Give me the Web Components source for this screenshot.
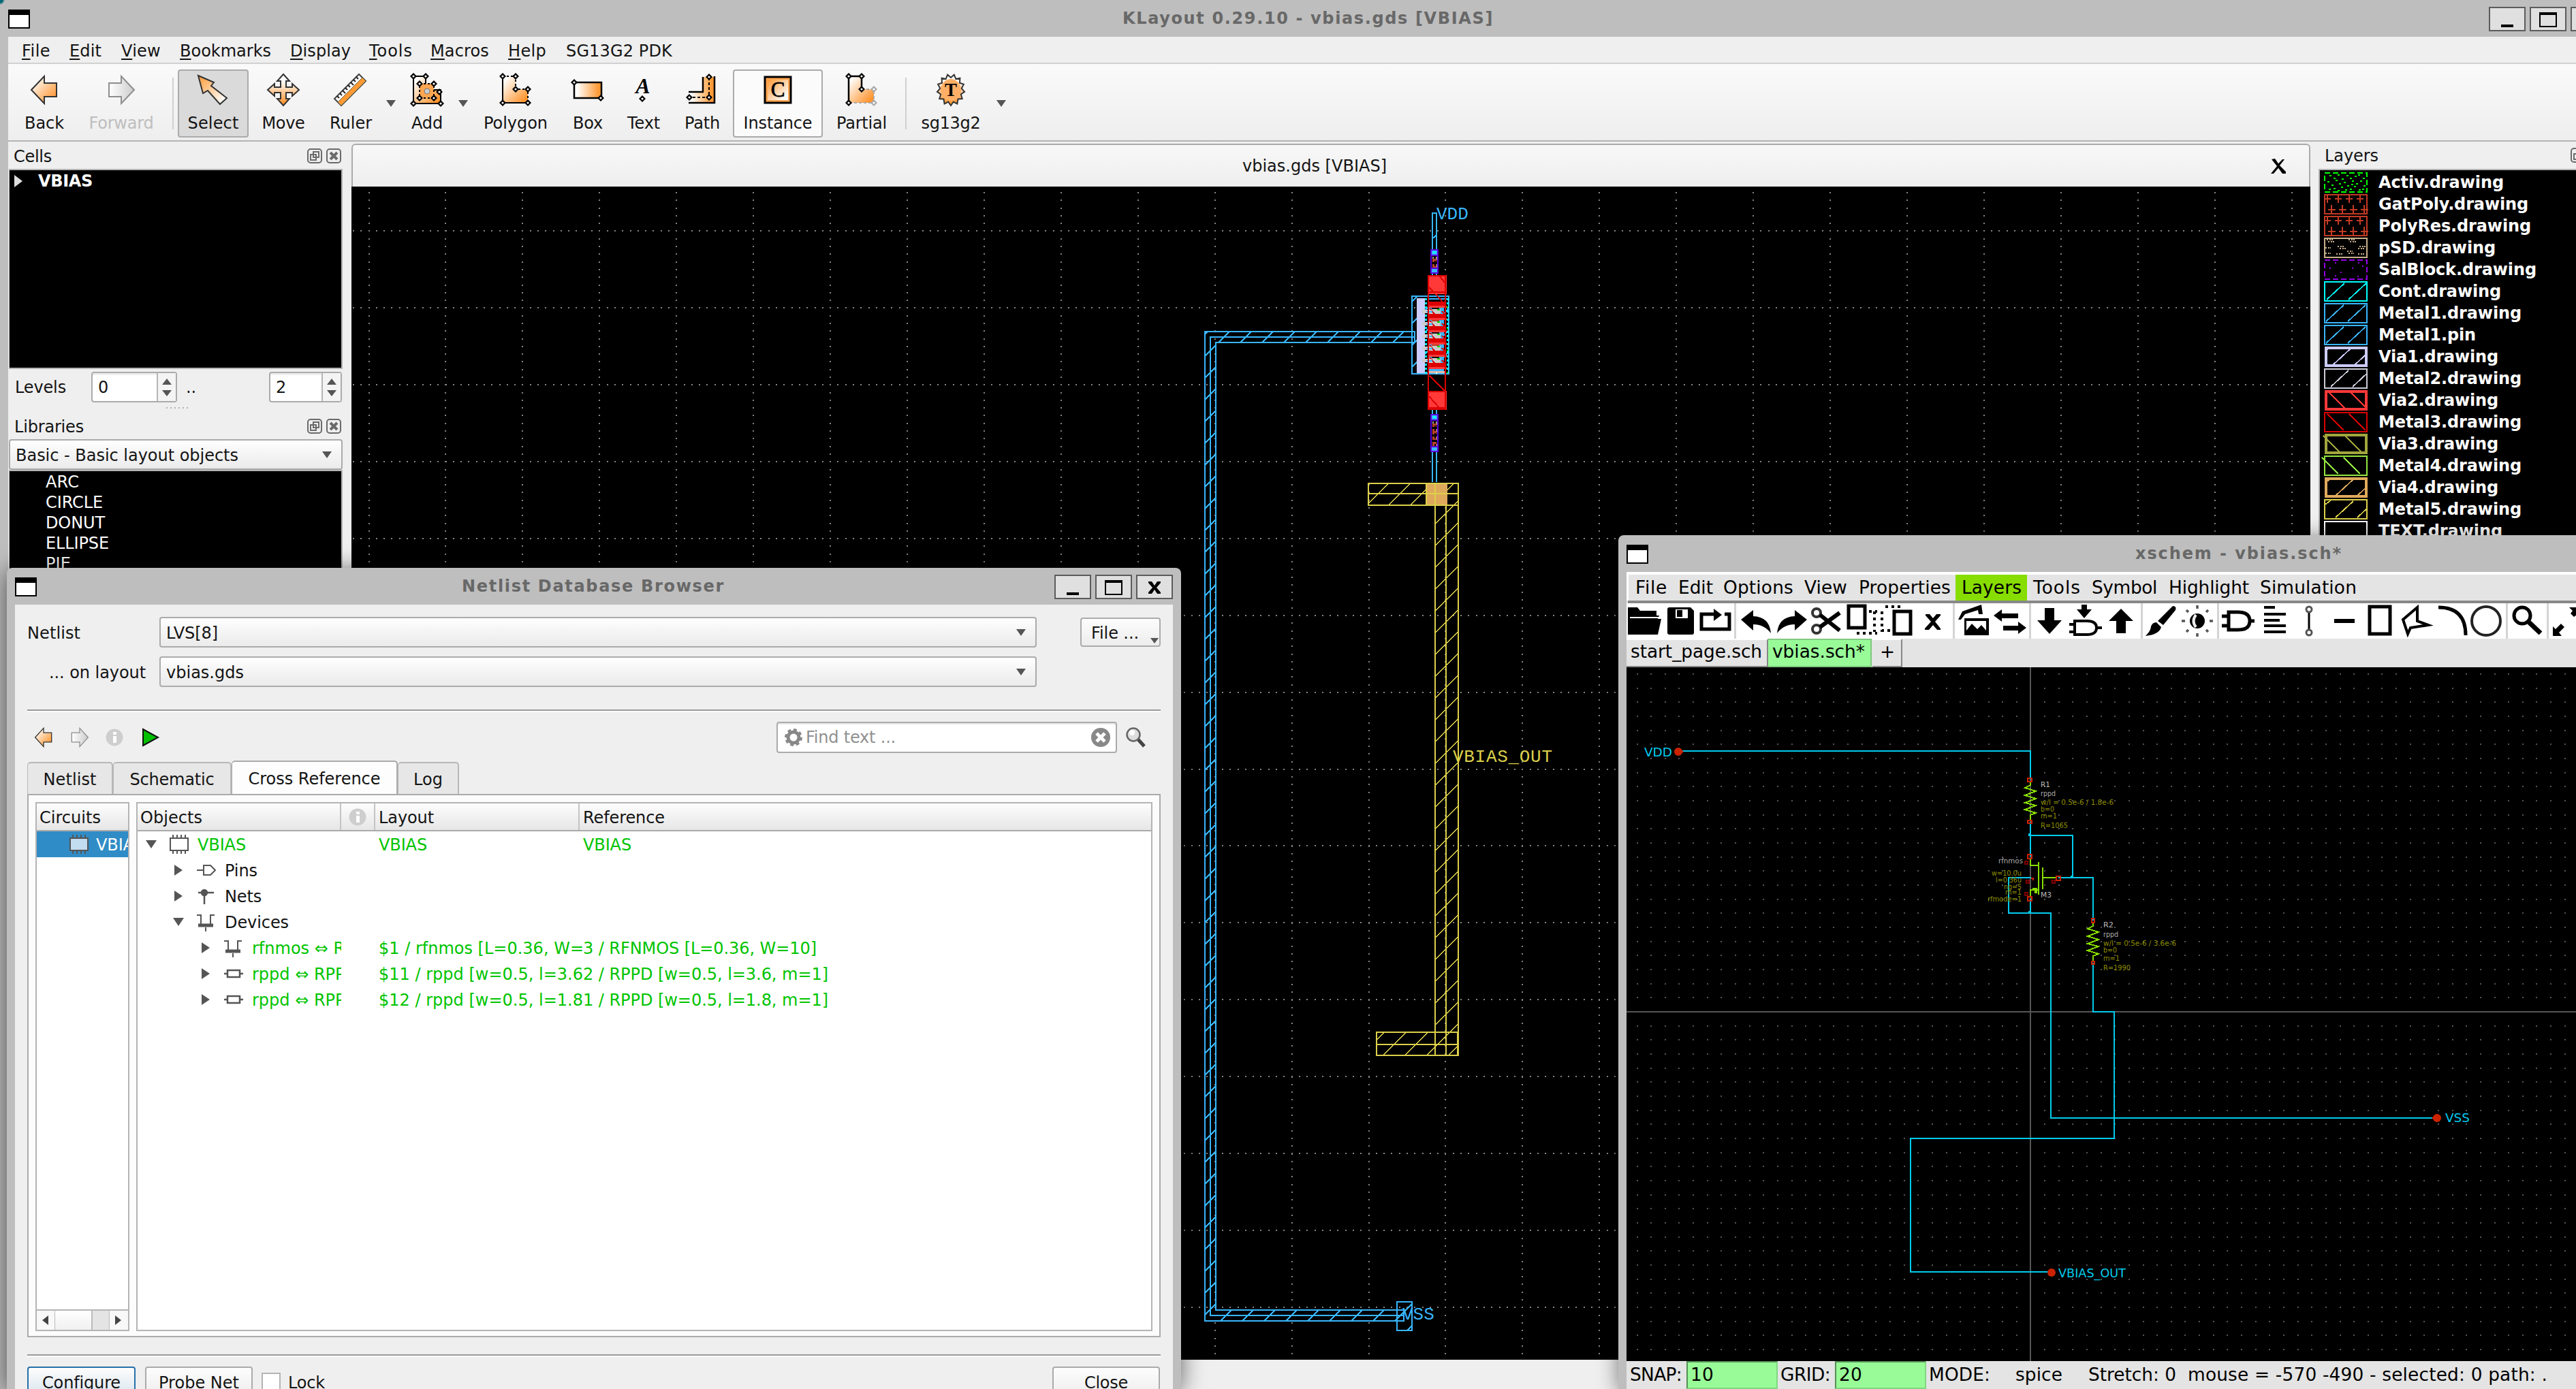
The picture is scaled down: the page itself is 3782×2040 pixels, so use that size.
<!DOCTYPE html>
<html lang="en">
<head>
<meta charset="utf-8">
<title>KLayout 0.29.10 - vbias.gds [VBIAS]</title>
<style>
html,body{margin:0;padding:0;background:#bebebe}
body{width:3782px;height:2040px;overflow:hidden;position:relative;font:24px "DejaVu Sans",sans-serif;color:#141414}
netlist-browser{position:absolute;left:10px;top:834px}
xschem-window{position:absolute;left:2376px;top:786px}
</style>
</head>
<body>
<klayout-window></klayout-window>
<netlist-browser></netlist-browser>
<xschem-window></xschem-window>
<script>
const BASE = `*{box-sizing:border-box}
.row{display:flex;align-items:center}.col{display:flex;flex-direction:column}
.it{flex:none;display:flex;align-items:center;white-space:pre}svg{display:block;flex:none;overflow:visible}`;

function define(name, css, html){
  customElements.define(name, class extends HTMLElement{
    connectedCallback(){
      if(this.shadowRoot) return;
      this.attachShadow({mode:'open'}).innerHTML =
        `<style>${BASE}${css}</style>` + (typeof html === 'function' ? html(this) : html);
    }
  });
}
/* Row of cells: each entry is [start, width, markup]; gaps become margins. */
function flow(items, origin = 0){
  let p = origin;
  return items.map(([x, w, h, extra = '']) => {
    const m = x - p; p = x + w;
    return `<div class="it" style="margin-left:${m}px;width:${w}px;${extra}">${h}</div>`;
  }).join('');
}
const T = (t, w, st = '') => `<fit-text ${w ? `w="${w}"` : ''} style="${st}">${t}</fit-text>`;

/* Label whose tracking is tuned to a given advance width. */
customElements.define('fit-text', class extends HTMLElement{
  connectedCallback(){
    if(this.shadowRoot) return;
    this.attachShadow({mode:'open'}).innerHTML =
      '<style>:host{display:inline-block;white-space:pre;line-height:1.17;flex:none;padding-top:var(--dy,0px)}::slotted(u){text-underline-offset:3px;text-decoration-thickness:2px}</style><span><slot></slot></span>';
    const w = +this.getAttribute('w');
    if(w){
      const s = this.shadowRoot.querySelector('span');
      const n = this.textContent.length;
      s.style.letterSpacing = ((w - s.getBoundingClientRect().width) / n) + 'px';
    }
  }
});

/* ---------- small shared widgets ---------- */
define('menu-icon', ':host{display:block;width:32px;height:28px;border:2px solid #000;border-top-width:8px;background:#fff;flex:none;margin-top:2px}', '');
define('title-button', ':host{display:block;width:54px;height:36px;background:#e0e0e0;border:2px solid #5c5c5c;flex:none;margin-top:2px}', el => {
  const k = el.getAttribute('kind');
  return `<svg width="50" height="32">` + ({
    min:'<path d="M16 24H34V28H16Z"/>',
    max:'<path d="M12 6H38V28H12ZM14 10V26H36V10Z" fill-rule="evenodd"/>',
    close:'<path d="M16 8H21L25 14L29 8H34V10L28 17L34 24V26H29L25 20L21 26H16V24L22 17L16 10Z"/>'}[k]) + `</svg>`;
});
define('dock-buttons', ':host{display:block;flex:none}',
 `<svg width="52" height="22" fill="none" stroke="#6b6b6b" stroke-width="2"><rect x="1" y="1" width="20" height="20" rx="4"/><path d="M9 5H17V13H9ZM5 9H13V17H5Z"/><rect x="29" y="1" width="20" height="20" rx="4"/><path d="M34 6L44 16M44 6L34 16" stroke-width="4"/></svg>`);
define('combo-box', `:host{display:flex;align-items:center;justify-content:space-between;height:45px;border:2px solid #ababab;border-radius:4px;background:linear-gradient(#fff,#f7f7f7 35%,#ebebeb);padding:0 14px 0 8px;flex:none}`,
 '<slot></slot><svg width="14" height="10"><path d="M0 0H14L7 10Z" fill="#555"/></svg>');
define('spin-box', `:host{display:flex;height:45px;border:2px solid #ababab;border-radius:4px;background:#fff;flex:none;box-shadow:inset 0 3px #eee}.t{flex:1;padding-left:8px}.b{width:28px;border-left:2px solid #b5b5b5;background:#f4f4f4;padding:8px 6px}`,
 '<div class="t row"><slot></slot></div><div class="b"><svg width="14" height="26" fill="#555"><path d="M0 9H14L7 0ZM0 17H14L7 26Z"/></svg></div>');
define('push-button', `:host{display:flex;align-items:center;justify-content:center;border:2px solid #ababab;border-radius:4px;background:linear-gradient(#fdfdfd,#ededed);flex:none}`, '<slot></slot>');

/* ---------- toolbar icons ---------- */
const dia = (x, y, c = '#000') => `<path d="M${x-5} ${y}L${x} ${y-5}L${x+5} ${y}L${x} ${y+5}Z" fill="${c}"/><circle cx="${x}" cy="${y}" r="1.6" fill="#fff"/>`;
const GR = `<defs><linearGradient id="h"><stop offset=".1" stop-color="#fff"/><stop offset=".9" stop-color="#ff9a35"/></linearGradient>
<linearGradient id="v" x1="0" y1="0" x2="0" y2="1"><stop offset=".2" stop-color="#fff"/><stop offset="1" stop-color="#ff8a1c"/></linearGradient>
<linearGradient id="d" x1="0" y1="0" x2="1" y2="1"><stop offset=".1" stop-color="#fff"/><stop offset=".9" stop-color="#ff932b"/></linearGradient>
<linearGradient id="r" x1="0" y1="0" x2="1" y2="1"><stop offset="0" stop-color="#ff9a35"/><stop offset=".9" stop-color="#fff"/></linearGradient>
<linearGradient id="g"><stop offset="0" stop-color="#fff"/><stop offset="1" stop-color="#ccc"/></linearGradient></defs>`;
let gear = '';
for(let i = 0; i < 26; i++){ const a = Math.PI*i/13, q = i%2 ? 18 : 23; gear += (i?'L':'M') + (24+q*Math.sin(a)*.88).toFixed(1)+' '+(24+q*Math.cos(a)).toFixed(1); }
gear += 'Z';
const ICON = {
 back:'<path d="M5 24L24 4V14H42V34H24V44Z" fill="url(#d)" stroke="#333" stroke-width="2"/>',
 fwd:'<path d="M43 24L24 4V14H6V34H24V44Z" fill="url(#g)" stroke="#8e8e8e" stroke-width="2"/>',
 select:'<path d="M2 3L25 13L21 18L44 36L34 45L16 25L9 29Z" fill="url(#r)" stroke="#333" stroke-width="2"/>',
 move:'<path d="M24 1L33 11H28V20H37V15L47 24L37 33V28H28V37H33L24 47L15 37H20V28H11V33L1 24L11 15V20H20V11H15Z" fill="url(#v)" stroke="#333" stroke-width="2"/>',
 ruler:'<path d="M36 1L46 11L10 47L0 37Z" fill="#fff" stroke="#444" stroke-width="2"/><path d="M41 6L46 11L10 47L5 42Z" fill="#ff9a35" stroke="#664" stroke-width="1"/><path d="M32 5L35 8M28 9L31 12M24 13L28 17M20 17L23 20M16 21L19 24M12 25L16 29M8 29L11 32M4 33L7 36" stroke="#222" stroke-width="2"/>',
 add:`<path d="M4 4H22V24H44V44H4Z" fill="url(#d)" stroke="#000" stroke-width="2"/><path d="M13 15H34V36H13Z" fill="#ffa550" stroke="#000" stroke-width="2" stroke-dasharray="3 3"/><circle cx="24" cy="26" r="4" fill="#ccc" stroke="#777"/>${dia(4,4)}${dia(22,4)}${dia(13,15)}${dia(34,15)}${dia(13,36)}${dia(34,36)}${dia(4,44)}${dia(44,44)}${dia(42,27)}`,
 polygon:`<path d="M5 4H24V23H42V43H5Z" fill="url(#d)"/><path d="M5 4V43H42" fill="none" stroke="#000" stroke-width="2"/><path d="M5 4H24V23H42V43" fill="none" stroke="#000" stroke-width="2" stroke-dasharray="3 3"/>${dia(5,4)}${dia(24,4)}${dia(24,23)}${dia(42,23)}${dia(5,43)}${dia(42,43)}`,
 box:`<path d="M4 13H44V36H4Z" fill="url(#h)" stroke="#000" stroke-width="2.5"/>${dia(4,13)}${dia(43,36)}`,
 text:`<text x="23" y="29" text-anchor="middle" font-family="Liberation Serif" font-size="32" font-weight="bold" font-style="italic">A</text>${dia(22,37)}`,
 path:`<path d="M25 5H42V43H4V27H25Z" fill="url(#h)"/><path d="M42 4V43H4M25 5V27H4" fill="none" stroke="#000" stroke-width="2.5"/><path d="M34 6V35H4" fill="none" stroke="#000" stroke-width="2" stroke-dasharray="4 3"/>${dia(34,5)}${dia(34,35)}${dia(5,35)}`,
 inst:`<path d="M5 5H43V43H5Z" fill="#ffa550" stroke="#000" stroke-width="3"/><path d="M9 9H39V39H9Z" fill="url(#r)"/><text x="24" y="34" text-anchor="middle" font-family="Liberation Serif" font-size="31" stroke="#000" stroke-width=".8">C</text>`,
 partial:`<path d="M5 4H24V23H42V43H5Z" fill="url(#d)"/><path d="M24 23V4H5V43" fill="none" stroke="#000" stroke-width="2.5"/><path d="M24 23H42V43H5" fill="none" stroke="#aaa" stroke-width="2" stroke-dasharray="4 3"/>${dia(5,4)}${dia(24,4)}${dia(24,23)}${dia(5,43)}${dia(42,23,'#aaa')}${dia(42,43,'#aaa')}`,
 tech:`<path d="${gear}" fill="url(#v)" stroke="#333" stroke-width="2"/><ellipse cx="24" cy="24" rx="15" ry="16" fill="#ffb066"/><text x="24" y="33" text-anchor="middle" font-family="Liberation Serif" font-size="27" font-weight="bold">T</text>`
};
define('tool-button', `:host{display:flex;flex-direction:column;align-items:center;width:100%;height:100px;padding-top:4px;gap:10px;border:2px solid transparent;border-radius:4px;--dy:1px}
:host([on]){background:#dadada;border-color:#ababab}:host([hot]){background:#fbfbfb;border-color:#ababab}:host([off]){color:#bebebe}`,
 el => `<svg width="48" height="48">${GR}${ICON[el.getAttribute('icon')]}</svg>${T(el.getAttribute('label'), el.getAttribute('w'))}`);

/* ---------- layout canvas ---------- */
function layoutSvg(){
  const B = '#38b6ff', Y = '#ddd04a', R = '#dc0000', V = '#ff3838';
  let s = '';
  for(let i = 0; i < 26; i++){ const x = 541.5 + 112.92*i; if(x < 3392) s += `<path d="M${x.toFixed(1)} 282V1997" stroke-dasharray="2 9.292"/>`; }
  for(let i = 0; i < 15; i++){ const y = 339 + 112.93*i; s += `<path d="M518 ${y.toFixed(1)}H3392" stroke-dasharray="2 9.292"/>`; }
  let m = '';
  for(let i = 0; i < 6; i++){
    const y = 443 + i*18;
    m += `<rect x="2097" y="${y}" width="26" height="6" fill="${R}"/><rect x="2098" y="${y+6}" width="26" height="3" fill="${V}"/>`;
    if(i < 5) m += `<rect x="2098" y="${y+11}" width="17" height="9" fill="#ccc"/><rect x="2110" y="${y+11}" width="4" height="2" fill="#0d0"/><rect x="2102" y="${y+9}" width="11" height="2" fill="${i%2?'#b8432a':'#111'}"/><path d="M2099 ${y+10}L2108 ${y+20}M2117 ${y+14}L2122 ${y+20}" stroke="${R}" stroke-width="2"/><rect x="2088" y="${y+12}" width="14" height="5" fill="#ccc"/><rect x="2094" y="${y+14}" width="9" height="2" fill="${B}"/>`;
  }
  const res = (y, h) => `<rect x="2101" y="${y+1}" width="10" height="${h-2}" fill="#000" stroke="#5a00e0" stroke-width="2.4"/><rect x="2102" y="${y+2}" width="8" height="6" fill="${B}"/><rect x="2104" y="${y+3}" width="4" height="3" fill="#0ff"/><path d="M2100 ${y+9}H2112M2100 ${y+h-8}H2112" stroke="#5a00e0" stroke-width="2"/><path d="M2103.5 ${y+11}V${y+h-9}M2109 ${y+11}V${y+h-9}" stroke="#999" stroke-width="2" stroke-dasharray="5 6"/><path d="M2106 ${y+14}V${y+h-9}" stroke="#b8432a" stroke-width="6" stroke-dasharray="5 3 8 3"/><path d="M2106.500 ${y+11}V${y+h-9}" stroke="#000" stroke-width="2" stroke-dasharray="3 3 2 3"/><rect x="2102" y="${y+h-7}" width="8" height="5" fill="${B}"/>`;
  const hb = 'fill="url(#hb)"', hy = 'fill="url(#hy)"';
  return `<svg width="2876" height="1723" viewBox="516 274 2876 1723" shape-rendering="crispEdges">
<defs><pattern id="hb" patternUnits="userSpaceOnUse" width="32" height="32"><path d="M-2 22L22 -2M18 34L34 18" stroke="${B}" stroke-width="1.6"/></pattern>
<pattern id="hy" patternUnits="userSpaceOnUse" width="32" height="32"><path d="M-2 30.500L30.500 -2M26.500 34L34 26.500" stroke="${Y}" stroke-width="1.6"/></pattern></defs>
<rect x="516" y="274" width="2876" height="1723" fill="#000"/>
<g stroke="#858585" stroke-width="2" fill="none">${s}</g>
<path d="M2077 487H1769V1940H2061V1924H1785V503H2077Z" ${hb} stroke="${B}" stroke-width="2"/>
<path d="M2077 495H1777V1932H2061" fill="none" stroke="${B}" stroke-width="2"/>
<rect x="2051" y="1912" width="22" height="42" ${hb} stroke="${B}" stroke-width="2"/>
<path d="M2103 366V313H2109V366M2103 400V406M2109 400V406M2103 600V608M2109 600V608M2103 664V708M2109 664V708M2104 350L2108 346M2104 374L2108 368" fill="none" stroke="${B}" stroke-width="2"/>
${res(366,36)}${res(608,56)}
<rect x="2073" y="435" width="54" height="114" ${hb} stroke="${B}" stroke-width="2"/>
<rect x="2080" y="438" width="12" height="110" fill="#ccf"/>
<rect x="2096" y="436" width="24" height="113" fill="${B}"/>
<path d="M2093 438V548M2125 438V548" stroke="#0ff" stroke-width="3" stroke-dasharray="3 3"/>
<path d="M2125 450V548" stroke="#0c0" stroke-width="2" stroke-dasharray="2 30"/>
<rect x="2096" y="434" width="27" height="9" fill="#000"/>
<path d="M2094 435H2127M2096 439H2124" stroke="${B}" stroke-width="2"/>
${m}
<path d="M2098 546H2122" stroke="#dba" stroke-width="3"/><rect x="2108" y="547" width="2" height="2" fill="#fff"/>
<rect x="2096" y="550" width="26" height="26" fill="#000"/>
<rect x="2096" y="404" width="28" height="28" fill="${V}"/><rect x="2096" y="574" width="28" height="28" fill="${V}"/>
<path d="M2097 405H2122V601H2097ZM2097 429H2122M2097 575H2122M2097 599H2122" fill="none" stroke="${R}" stroke-width="2"/>
<path d="M2098 422L2104 428M2114 406L2121 415M2108 432L2120 446M2099 552L2121 574M2098 582L2114 600" stroke="${R}" stroke-width="2"/>
<rect x="2009" y="710" width="132" height="32" ${hy} stroke="${Y}" stroke-width="2"/>
<rect x="2107" y="742" width="34" height="808" ${hy} stroke="${Y}" stroke-width="2"/>
<rect x="2021" y="1516" width="119" height="34" ${hy} stroke="${Y}" stroke-width="2"/>
<rect x="2093" y="710" width="32" height="32" fill="#dfaa5c"/>
<path d="M2009 725H2141M2009 710H2141M2009 742H2141M2094 710V742M2107 710V742M2123 742V1550M2022 1534H2140" stroke="${Y}" stroke-width="2"/>
<g font-family="Liberation Mono" font-size="26" shape-rendering="auto"><text x="2109" y="322" fill="${B}">VDD</text><text x="2059" y="1938" fill="${B}">VSS</text><text x="2133" y="1119" fill="${Y}" textLength="146">VBIAS_OUT</text></g>
</svg>`;
}
define('layout-canvas', ':host{display:block;width:2876px;height:1723px}', layoutSvg);

/* ---------- layer list ---------- */
define('layer-row', ':host{display:flex;align-items:center;height:32px;gap:16px;font-weight:bold;color:#fff;flex:none;--dy:0px}', el => {
  const c = el.getAttribute('c'), k = el.getAttribute('k'), t = +el.getAttribute('t') || 2;
  const o = +el.getAttribute('o') || 0;
  let p = '';
  if(k === '/') p = `<path d="M${4+o} 27L${30+o} 3M${36+o} 27L${Math.min(62,62+o)} ${o>0?3+o*.92:3}${o>8?'M2 '+(o*.6)+'L10 2':''}"/>`;
  if(k === '\\') p = `<path d="M${6+o} 3L${30+o} 27M${38+o} 3L${Math.min(62,62+o)} ${27-Math.max(0,o)*.9}"/>`;
  if(k === '+') for(let i = 0; i < 4; i++) p += `<path d="M${5+i*16} 1V13M${Math.max(2,i*16)} 7H${10+i*16}M${11+i*16} 16V29M${6+i*16} 23H${17+i*16}"/>`;
  if(k === '.') [[8,4],[14,8],[20,3],[26,9],[33,4],[38,8],[45,5],[50,3],[57,8],[5,13],[11,18],[17,11],[22,16],[29,14],[34,19],[41,12],[47,16],[53,12],[58,19],[7,24],[14,23],[20,26],[25,21],[31,25],[38,24],[44,20],[51,25],[56,24],[40,17]].forEach(([x,y]) => p += `<rect x="${x}" y="${y}" width="3" height="2" fill="${c}" stroke="none"/>`);
  if(k === 's') [[16,4],[50,4],[8,12],[41,12],[56,9],[24,18],[16,23],[49,24]].forEach(([x,y]) => p += `<rect x="${x}" y="${y}" width="2" height="2" fill="${c}" stroke="none"/>`);
  if(k === '~') p = `<path stroke-dasharray="2 1.500" d="M4 3H14M6 6H16M36 3H46M38 6H48M2 15H10M20 13H30M23 16H33M52 13H62M50 16H60M2 23H10M18 24H28M34 20H42M36 23H44M50 24H60"/>`;
  return `<svg width="64" height="30" fill="none" stroke="${c}" stroke-width="${k==='+'?2:1.8}" shape-rendering="crispEdges">${p}<rect x="${t/2+(t>2?.5:0)}" y="${t/2}" width="${64-t-(t>2?1:0)}" height="${30-t}" stroke-width="${t}" ${k==='.'||k==='s'?'stroke-dasharray="8 4"':''}/></svg>` + T(el.textContent, el.getAttribute('w'));
});

/* ---------- main window ---------- */
define('klayout-window', `:host{display:flex;flex-direction:column;width:3782px;height:2040px;background:#bebebe;overflow:hidden}
.title{height:54px;font-weight:bold;color:#686868;background:radial-gradient(circle at 0 0,#067 0,#067 4px,#bebebe 7px);flex:none}
.body{margin-left:12px;background:#efefef;flex:1;--dy:3px}
.menu{height:38px;flex:none;padding-top:1px}.tools{height:116px;border-top:2px solid #d2d2d2;border-bottom:2px solid #b4b4b4;background:linear-gradient(#fafafa,#eee);align-items:flex-start;flex:none;padding-top:8px}
.sep{width:2px;height:76px;background:#d0d0d0;margin-top:12px}.arr{margin-top:45px}
.main{display:flex;flex:1}.left{width:504px;flex:none;padding-left:1px}.hd{height:40px;flex:none;padding-right:14px;justify-content:space-between}
.tree{background:#000;color:#fff;border:2px solid #b4b4b4;border-width:2px 2px 2px 1px;width:490px;flex:none}
.center{width:2876px;flex:none;padding-top:3px}.tab{height:63px;flex:none;border:2px solid #ababab;border-bottom:0;border-radius:6px 6px 0 0;background:linear-gradient(#f8f8f8,#eee)}
.right{flex:1}.layers{margin-left:12px;background:#000;border:2px solid #b4b4b4;border-right:0;flex:1;padding:2px 0 0 6px}`, () => {
  const arr = '<svg class="arr" width="14" height="10"><path d="M0 0H14L7 10Z" fill="#555"/></svg>';
  const b = (i, l, w, a = '') => `<tool-button icon="${i}" label="${l}" w="${w}" ${a}></tool-button>`;
  const L = [['Activ.drawing','#0f0','.',184],['GatPoly.drawing','#c33a24','+',220],['PolyRes.drawing','#c33a24','+',224],['pSD.drawing','#c8b08c','~',172],['SalBlock.drawing','#9400e8','s',232],['Cont.drawing','#0ff','/',180],['Metal1.drawing','#38b6ff','/',210,2,-1],['Metal1.pin','#38b6ff','/',143,2,-1],['Via1.drawing','#ccf','/',176,4,9],['Metal2.drawing','#ccccd8','/',210,2,6],['Via2.drawing','#ff3838','\\',176,4,1],['Metal3.drawing','#dc0000','\\',210,2,-1],['Via3.drawing','#a0a63c','\\',176,4,-7],['Metal4.drawing','#94e840','\\',210,2,-9],['Via4.drawing','#dfaa5c','/',176,4,13],['Metal5.drawing','#ddd04a','/',210,2,13],['TEXT.drawing','#fff','',182]];
  return `<div class="title row">${flow([[12,32,'<menu-icon></menu-icon>'],[1648,546,T('KLayout 0.29.10 - vbias.gds [VBIAS]',545)],[3654,54,'<title-button kind="min"></title-button>'],[3714,54,'<title-button kind="max"></title-button>'],[3774,54,'<title-button kind="close"></title-button>']])}</div>
<div class="body col">
<div class="menu row">${flow([[32,50,T('<u>F</u>ile',42)],[102,60,T('<u>E</u>dit',47)],[178,70,T('<u>V</u>iew',58)],[264,140,T('<u>B</u>ookmarks',134)],[426,100,T('<u>D</u>isplay',89)],[542,70,T('<u>T</u>ools',64)],[632,100,T('<u>M</u>acros',86)],[746,60,T('<u>H</u>elp',56)],[831,160,T('SG13G2 PDK',156)]],12)}</div>
<div class="tools row">${flow([[25,80,b('back','Back',58)],[128,100,b('fwd','Forward',95,'off')],[253,2,'<div class="sep"></div>'],[261,104,b('select','Select',75,'on')],[376,80,b('move','Move',63)],[475,80,b('ruler','Ruler',62)],[567,14,arr],[587,80,b('add','Add',46)],[673,14,arr],[703,108,b('polygon','Polygon',94)],[823,80,b('box','Box',44)],[905,80,b('text','Text',48)],[991,80,b('path','Path',52)],[1076,132,b('inst','Instance',101,'hot')],[1225,80,b('partial','Partial',74)],[1329,2,'<div class="sep"></div>'],[1346,100,b('tech','sg13g2',87)],[1463,14,arr]],12)}</div>
<div class="main">
<div class="left col">
<div class="hd row" style="padding-left:7px;padding-right:0;padding-top:1px">${T('Cells',56)}<dock-buttons style="margin-right:13px"></dock-buttons></div>
<div class="tree" style="height:294px;padding:2px 0 0 7px;--dy:0px"><div class="row" style="gap:23px;font-weight:bold"><svg width="12" height="18"><path d="M0 0V18L12 9Z" fill="#ddd"/></svg>${T('VBIAS',80)}</div></div>
<div class="row" style="height:50px;padding-top:2px">${flow([[22,90,T('Levels',75)],[134,126,`<spin-box style="width:126px">${T('0')}</spin-box>`],[273,20,T('..',15)],[395,107,`<spin-box style="width:107px">${T('2')}</spin-box>`]],13)}</div>
<svg width="34" height="2" style="margin:6px 0 0 231px"><path d="M0 1H34" stroke="#b0b0b0" stroke-width="2" stroke-dasharray="2 4"/></svg>
<div class="row" style="height:44px;padding-left:8px;padding-top:7px;justify-content:space-between">${T('Libraries',102)}<dock-buttons style="margin-right:13px"></dock-buttons></div>
<combo-box style="width:490px;margin-top:1px">${T('Basic - Basic layout objects',327)}</combo-box>
<div class="tree" style="height:200px;padding-left:53px;line-height:30px">
${[['ARC',49],['CIRCLE',84],['DONUT',87],['ELLIPSE',93],['PIE',37]].map(([a,w])=>`<div class="row" style="height:30px">${T(a,w)}</div>`).join('')}</div>
</div>
<div class="center col"><div class="tab row" style="--dy:1px">${flow([[1824,215,T('vbias.gds [VBIAS]',212)],[3334,22,'<svg width="22" height="22" viewBox="0 0 22 24" preserveAspectRatio="none"><path d="M1 1L6 0L11 8L17 1H20L13 11L22 21V24H17L11 15L4 24H0L9 12Z"/></svg>']],518)}</div><layout-canvas></layout-canvas><div style="flex:1"></div></div>
<div class="right col"><div class="hd row" style="padding:0 0 0 21px">${T('Layers',79)}<dock-buttons style="margin-right:-44px"></dock-buttons></div>
<div class="layers col">${L.map(([n,c,k,w,t=2,o=0])=>`<layer-row c="${c}" k="${k}" w="${w}" t="${t}" o="${o}">${n}</layer-row>`).join('')}</div></div>
</div></div>`;
});

/* ---------- netlist browser ---------- */
const small = {
 chip:(f='#fff')=>`<svg width="28" height="28" fill="none" stroke="#555" stroke-width="2"><rect x="1" y="5" width="26" height="18" fill="${f}"/><path d="M5 0V5M11 0V5M17 0V5M23 0V5M5 23V28M11 23V28M17 23V28M23 23V28"/></svg>`,
 pin:'<svg width="28" height="28" fill="none" stroke="#555" stroke-width="2"><path d="M0 14H10M10 7H20L27 14L20 21H10Z"/></svg>',
 net:'<svg width="28" height="28" stroke="#555" stroke-width="2.500" fill="#555"><path d="M11 4V26M2 9H25"/><circle cx="11" cy="9" r="4"/></svg>',
 dev:'<svg width="28" height="28" fill="none" stroke="#555" stroke-width="2"><path d="M0 4H6V18M26 4H20V18M13 22V28"/><path d="M2 19H24" stroke-width="5"/></svg>',
 res:'<svg width="28" height="28" fill="none" stroke="#555" stroke-width="2.500"><path d="M0 14H5M23 14H28M5 9H23V19H5Z"/></svg>'
};
const info = '<svg width="26" height="26"><circle cx="13" cy="13" r="12.500" fill="#cecece"/><path d="M11 11H16V21H11ZM11 5H16V9H11Z" fill="#fff"/></svg>';
define('netlist-browser', `:host{display:flex;flex-direction:column;width:1724px;height:1206px;background:#bebebe;border-radius:8px 8px 0 0;box-shadow:0 4px 34px rgba(0,0,0,.6);overflow:hidden}
.title{height:54px;font-weight:bold;color:#686868;flex:none}.body{margin:0 12px;background:#efefef;flex:1;padding:0 18px;--dy:3px}
.hr{height:4px;border-top:2px solid #9a9a9a;border-bottom:2px solid #fff;flex:none}
.tab{border:2px solid #b8b8b8;border-left-width:1px;border-bottom:0;border-radius:5px 5px 0 0;background:#e7e7e7;justify-content:center;height:47px;align-self:flex-end;flex:none}
.tab.on{background:#fdfdfd;border-color:#ababab;height:51px;margin-bottom:-2px;--dy:2px}
.pane{border:2px solid #ababab;background:#fcfcfc;height:798px;padding:10px 10px 8px;gap:10px;display:flex;flex:none}
.tree{border:2px solid #b4b4b4;background:#fff;overflow:hidden;height:777px}.head{height:41px;border-bottom:2px solid #ababab;background:linear-gradient(#fdfdfd,#e6e6e6);flex:none}
.c{border-right:2px solid #c4c4c4;height:39px;overflow:hidden;--dy:4px}.c:last-child{border:0}.r{height:38px;flex:none;--dy:2px}.g{color:#00c400}`, () => {
  const dn = '<svg width="16" height="12"><path d="M0 0H16L8 12Z" fill="#555"/></svg>', rt = '<svg width="12" height="16"><path d="M0 0V16L12 8Z" fill="#555"/></svg>';
  const row = (d, a, ic, t, l = '', r = '', g = '') => {
    const x = 215 + d*40;
    return `<div class="r row ${g}">${flow([[x,16,a,'justify-content:center;height:38px'],[x+35,28,ic],[x+76,502-x-76,t,'overflow:hidden;height:38px'],[557,298,l],[857,500,r]],203)}</div>`;
  };
  return `<div class="title row">${flow([[22,32,'<menu-icon></menu-icon>'],[678,390,T('Netlist Database Browser',386)],[1548,54,'<title-button kind="min"></title-button>'],[1608,54,'<title-button kind="max"></title-button>'],[1668,54,'<title-button kind="close"></title-button>']],10)}</div>
<div class="body col">
<div class="row" style="margin-top:18px;height:45px">${flow([[40,190,T('Netlist',78)],[234,1288,`<combo-box style="width:1288px">${T('LVS[8]',76)}</combo-box>`],[1586,118,`<push-button style="width:118px;height:43px;justify-content:flex-start;padding-left:14px">${T('File ...',70)}<svg width="12" height="8" style="margin:24px 0 0 17px"><path d="M0 0H12L6 8Z" fill="#555"/></svg></push-button>`]],40)}</div>
<div class="row" style="margin-top:13px;height:45px">${flow([[72,150,T('... on layout',142)],[234,1288,`<combo-box style="width:1288px">${T('vbias.gds',114)}</combo-box>`]],40)}</div>
<div class="hr" style="margin-top:33px"></div>
<div class="row" style="margin-top:14px;height:46px;--dy:1px">${flow([
 [51,26,`<svg width="26" height="30" viewBox="4 2 40 44" preserveAspectRatio="none">${GR}${ICON.back}</svg>`],[104,26,`<svg width="26" height="30" viewBox="4 2 40 44" preserveAspectRatio="none">${GR}${ICON.fwd}</svg>`],[155,26,info],[209,24,'<svg width="24" height="26"><path d="M1 1V25L23 13Z" fill="#00c000" stroke="#111" stroke-width="2"/></svg>'],
 [1140,500,`<div class="row" style="width:500px;height:46px;border:2px solid #ababab;border-radius:4px;background:#fff;box-shadow:inset 0 2px #e8e8e8;padding:0 8px 0 10px;color:#909090"><svg width="26" height="26" style="margin-right:5px"><circle cx="13" cy="13" r="8" fill="none" stroke="#888" stroke-width="5"/><circle cx="13" cy="13" r="11" fill="none" stroke="#888" stroke-width="4" stroke-dasharray="4.600 4"/></svg>${T('Find text ...',132)}<svg width="28" height="28" style="margin-left:auto"><circle cx="14" cy="14" r="14" fill="#888"/><path d="M8 8L20 20M20 8L8 20" stroke="#fff" stroke-width="5"/></svg></div>`],
 [1653,30,'<svg width="30" height="30"><path d="M17 17L27 28" stroke="#444" stroke-width="5"/><circle cx="11" cy="11" r="9.500" fill="#ddd" stroke="#666" stroke-width="2.500"/><circle cx="9" cy="8" r="4" fill="#fff"/></svg>']],40)}</div>
<div class="row" style="height:60px;flex:none">${[['Netlist',78,126],['Schematic',124,174],['Cross Reference',194,244],['Log',43,90]].map(([t,w,b],i)=>`<div class="tab row ${i==2?'on':''}" style="width:${b}px">${T(t,w)}</div>`).join('')}</div>
<div class="pane">
<div class="tree col" style="width:138px;flex:none"><div class="head row" style="padding-left:4px;--dy:4px">${T('Circuits',90)}</div>
<div class="r row" style="background:#308cc6;color:#fff">${flow([[103,28,small.chip('#c2dcf0')],[142,48,T('VBIAS',71),'overflow:hidden']],55)}</div>
<div style="flex:1"></div><div class="row" style="height:30px;border-top:2px solid #b4b4b4;background:#e4e4e4"><div class="row" style="width:27px;height:28px;background:#f8f8f8;border-right:1px solid #bbb;padding-left:8px"><svg width="9" height="14"><path d="M9 0V14L0 7Z" fill="#444"/></svg></div><div style="width:55px;height:28px;background:linear-gradient(#fff,#f0f0f0);border-right:2px solid #bbb"></div><div style="flex:1"></div><div class="row" style="width:28px;height:28px;background:#f8f8f8;border-left:1px solid #bbb;padding-left:8px"><svg width="9" height="14"><path d="M0 0V14L9 7Z" fill="#444"/></svg></div></div></div>
<div class="tree col" style="flex:1"><div class="head row">
<div class="c row" style="width:299px;padding-left:4px">${T('Objects',91)}</div><div class="c row" style="width:50px;justify-content:center">${info}</div><div class="c row" style="width:300px;padding-left:5px">${T('Layout',81)}</div><div class="c row" style="padding-left:5px">${T('Reference',120)}</div></div>
${row(0,dn,small.chip(),T('VBIAS',71),T('VBIAS',71),T('VBIAS',71),'g')}
${row(1,rt,small.pin,T('Pins',48))}${row(1,rt,small.net,T('Nets',54))}${row(1,dn,small.dev,T('Devices',94))}
${row(2,rt,small.dev,T('rfnmos ⇔ R'),T('$1 / rfnmos [L=0.36, W='),T('3 / RFNMOS [L=0.36, W=10]',343),'g')}
${row(2,rt,small.res,T('rppd ⇔ RPP'),T('$11 / rppd [w=0.5, l=3.6',300),T('2 / RPPD [w=0.5, l=3.6, m=1]',360),'g')}
${row(2,rt,small.res,T('rppd ⇔ RPP'),T('$12 / rppd [w=0.5, l=1.8',300),T('1 / RPPD [w=0.5, l=1.8, m=1]',360),'g')}
</div></div>
<div class="hr" style="margin-top:25px"></div>
<div class="row" style="margin-top:14px;height:46px;flex:none">${flow([[40,159,`<push-button style="width:159px;height:46px;border-color:#2470a8;background:linear-gradient(#fdfdfd,#d8e4ee)">${T('Configure',115)}</push-button>`],[213,158,`<push-button style="width:158px;height:46px">${T('Probe Net',118)}</push-button>`],[384,28,'<div style="width:28px;height:28px;border:2px solid #b4b4b4;background:#fff"></div>'],[423,60,T('Lock',54)],[1545,158,`<push-button style="width:158px;height:46px">${T('Close',64)}</push-button>`]],40)}</div>
</div>`;
});

/* ---------- schematic ---------- */
function schematicSvg(){
  const C = '#00ccee', G = '#88dd00', R = '#cc2200';
  const zig = (x, y) => `<path d="M${x} ${y+3}V${y+8}L${x-8} ${y+12}L${x+8} ${y+17}L${x-8} ${y+23}L${x+8} ${y+28}L${x-8} ${y+34}L${x+8} ${y+38}L${x-8} ${y+44}L${x+8} ${y+49}L${x} ${y+52}V${y+59}" stroke="${G}"/>`;
  const sq = (x, y, w = 6, h = 6) => `<rect x="${x-w/2}" y="${y-h/2}" width="${w}" height="${h}" stroke="${R}"/>`;
  const t = (x, y, s, w, c = '#8f8f00', z = 10.5, a = '') => `<text x="${x}" y="${y}" fill="${c}" font-size="${z}" ${w ? `textLength="${w}" lengthAdjust="spacingAndGlyphs"` : ''} ${a}>${s}</text>`;
  let rows = '';
  for(let y = 1486 - 24*20.67; y < 1999; y += 20.67) rows += `<path d="M2402.500 ${y.toFixed(1)}H3782" stroke-dasharray="2 18.640"/>`;
  const E = 'text-anchor="end"';
  return `<svg width="1394" height="1019" viewBox="2388 980 1394 1019"><rect x="2388" y="980" width="1394" height="1019" fill="#000"/>
<g stroke="#555" stroke-width="2" shape-rendering="crispEdges">${rows}<path d="M2981 980V1999M2388 1486H3782"/></g>
<g fill="none" stroke="${C}" stroke-width="2" shape-rendering="crispEdges">
<path d="M2464 1103H2981V1145M2981 1207V1258M2981 1227H3043V1289M3022 1289H3073V1352M3073 1414V1486H3104V1672H2805V1868H3010M2982 1289H2949V1341H3011V1642H3578M2981 1320V1341"/>
${zig(2981,1145)}${zig(3073,1352)}
<path d="M2981 1262V1271H2993M2993 1266V1314M2999 1274V1306M2999 1289H3018M2993 1307H2981V1317" stroke="${G}"/><path d="M2984 1305H2990V1311H2988V1307Z" fill="${G}" stroke="${G}"/>
${sq(2980,1145,6,5)}${sq(2980,1207,6,4)}${sq(2980,1258)}${sq(3022,1290)}${sq(2980,1320)}${sq(3073,1352,4,6)}${sq(3073,1414,4,4)}
<path d="M2982 1290H2985V1293" stroke="${R}"/>
<g stroke="#800000"><rect x="2973" y="1265" width="4" height="4"/><rect x="2975" y="1293" width="4" height="4"/><rect x="2973" y="1311" width="4" height="4"/><rect x="3013" y="1293" width="4" height="4"/></g>
</g>
<path d="M2978 1224H2982V1228H2978ZM3040 1286H3044V1290H3040ZM2978 1338H2982V1342H2978Z" fill="${C}"/>
<g fill="${R}"><circle cx="2464" cy="1104" r="6"/><circle cx="3578" cy="1642" r="6"/><circle cx="3012" cy="1869" r="6"/><path d="M2464 1098L2472 1104L2464 1110ZM3578 1636L3570 1642L3578 1648Z"/></g>
<g font-family="DejaVu Sans">
${t(2414,1111,'VDD',41,C,17)}${t(3590,1648,'VSS',36,C,17)}${t(3022,1876,'VBIAS_OUT',99,C,17)}
${t(2996,1156,'R1',14,'#bbb',11)}${t(2996,1169,'rppd',22,'#aaa')}${t(2996,1182,'w/l = 0.5e-6 / 1.8e-6',107)}${t(2996,1192,'b=0',20)}${t(2996,1202,'m=1',24)}${t(2996,1216,'R=1065',40)}
${t(3088,1362,'R2',15,'#bbb',11)}${t(3088,1376,'rppd',22,'#aaa')}${t(3088,1389,'w/l = 0.5e-6 / 3.6e-6',107)}${t(3088,1399,'b=0',20)}${t(3088,1411,'m=1',24)}${t(3088,1425,'R=1990',40)}
${t(2970,1268,'rfnmos',36,'#aaa',10.5,E)}${t(2968,1286,'w=10.0u',44,undefined,10.5,E)}${t(2968,1296,'l=0.36u',38,undefined,10.5,E)}${t(2968,1306,'ng=5',26,undefined,10,E)}${t(2968,1314,'m=1',24,undefined,10,E)}${t(2968,1324,'rfmode=1',50,undefined,10.5,E)}
${t(2996,1318,'M3',16,'#bbb',11)}
</g></svg>`;
}
define('schematic-canvas', ':host{display:block;width:1394px;height:1019px;flex:none}', schematicSvg);

/* Monochrome tool glyphs, 48px tall, one cell each. */
const XI = {
 open:'<path d="M0 4H14L18 9H42V16H46L44 21H0ZM4 21H49L44 44H0V21Z"/><path d="M3 19H46" stroke="#fff" stroke-width="2"/>',
 save:'<path d="M2 7Q2 4 5 4H36L41 9V41Q41 44 38 44H5Q2 44 2 41Z"/><path d="M14 7H32V20H14Z" fill="#fff"/><path d="M16 8H24V18H16Z"/>',
 reload:'<path d="M14 14H4V36H45V14H38M10 14H24" fill="none" stroke="#000" stroke-width="5"/><path d="M22 6L34 15L22 24Z"/>',
 undo:'<path d="M0 22L18 8V17Q42 18 44 42Q34 29 18 29V38Z"/>',
 redo:'<path d="M44 22L26 8V17Q2 18 0 42Q10 29 26 29V38Z"/>',
 cut:'<g fill="none" stroke="#333" stroke-width="4"><circle cx="9" cy="12" r="6"/><circle cx="9" cy="36" r="6"/><path d="M14 15L43 38M14 33L43 12" stroke="#000" stroke-width="6"/></g>',
 copy:'<rect x="4" y="2" width="24" height="32" fill="none" stroke="#000" stroke-width="5"/><path d="M16 42H46M42 10V40M34 10H46" fill="none" stroke="#000" stroke-width="4" stroke-dasharray="4 5"/>',
 paste:'<rect x="21" y="10" width="24" height="33" fill="none" stroke="#000" stroke-width="5"/><path d="M8 3H34M3 10V38H16" fill="none" stroke="#000" stroke-width="4" stroke-dasharray="4 5"/>',
 x:'<path d="M2 14H8L13 20L18 14H24V16L16 25L24 35V37H19L13 30L7 37H1V35L10 25L2 16Z"/>',
 pics:'<path d="M0 22L6 10L34 0L36 14H30L29 8L10 14L4 22Z"/><path d="M9 20H45V45H9ZM12 24V38L20 28L28 36L34 30L41 38V24Z" fill-rule="evenodd"/>',
 swap:'<path d="M0 16L12 7V13H36V20H12V25ZM48 34L36 25V31H14V38H36V43Z"/>',
 down:'<path d="M11 5H25V23H36L18 43L0 23H11Z"/>',
 up:'<path d="M12 42H26V24H37L19 6L1 24H12Z"/>',
 desc:'<path d="M20 0H28V7H35L24 20L13 7H20Z"/><path d="M10 24H28Q42 24 42 34Q42 44 28 44H10ZM2 29H10M2 40H10M42 34H50" fill="none" stroke="#000" stroke-width="4"/>',
 brush:'<path d="M40 2Q46 2 44 8L26 30L18 24ZM16 26L23 33Q20 44 0 46Q8 38 8 32Q10 26 16 26Z"/>',
 sun:'<circle cx="24" cy="24" r="11" fill="#000"/><path d="M22 15Q15 24 22 33" fill="none" stroke="#eee" stroke-width="4"/><path d="M24 1V6M24 42V47M1 24H6M42 24H47M8 8L11 11M37 37L40 40M8 40L11 37M37 11L40 8" stroke="#555" stroke-width="3.500"/>',
 gate:'<path d="M10 11H24Q41 11 41 24Q41 37 24 37H10ZM0 17H10M0 31H10M41 24H48" fill="none" stroke="#000" stroke-width="5"/>',
 text:'<path d="M0 5H16M0 15H32M0 24H23M0 32H32M0 41H32" transform="translate(0 -1)" stroke="#000" stroke-width="4"/>',
 wire:'<path d="M7 10V38" stroke="#000" stroke-width="3"/><circle cx="7" cy="7" r="4" fill="#fff" stroke="#555" stroke-width="3"/><circle cx="7" cy="41" r="4" fill="#fff" stroke="#555" stroke-width="3"/>',
 line:'<path d="M0 21H30V27H0Z"/>',
 rect:'<rect x="3" y="3" width="30" height="40" fill="none" stroke="#000" stroke-width="5"/>',
 poly:'<path d="M24 4V24L40 30L14 34L10 43L3 22Z" fill="none" stroke="#000" stroke-width="4"/>',
 arc:'<path d="M0 4Q40 4 40 45" fill="none" stroke="#000" stroke-width="5"/>',
 circle:'<circle cx="24" cy="24" r="21" fill="none" stroke="#222" stroke-width="4"/>',
 zoom:'<circle cx="15" cy="16" r="12" fill="none" stroke="#000" stroke-width="5"/><path d="M24 25L42 42" stroke="#000" stroke-width="7"/>',
 full:'<path d="M0 46V32L4 36L12 28L17 33L9 41L13 46ZM24 4H40V20L35 15L31 18L26 13L29 9Z"/>'
};
define('xschem-window', `:host{display:flex;flex-direction:column;width:1406px;height:1254px;background:#bebebe;border-radius:8px 0 0 0;box-shadow:0 4px 30px rgba(0,0,0,.5);overflow:hidden;font-size:26.4px;color:#000}
.title{height:54px;font-weight:bold;font-size:24px;color:#686868;flex:none}.body{margin-left:12px;flex:1;background:#e4e4e4}
.menu{height:42px;border-top:4px solid #fff;border-left:3px solid #fff;flex:none}.strip{height:4px;background:#888;flex:none;margin-left:2px}.tools{height:52px;background:#fff;flex:none}.s{width:3px;height:52px;background:#d4d4d4}
.tabs{height:42px;flex:none}.tab{height:42px;border-right:2px solid #888;border-bottom:2px solid #888;border-top:2px solid #fff;flex:none;width:100%;padding-left:6px;padding-bottom:4px}
.status{height:41px;flex:none}.f{background:#98fb98;width:100%;height:41px;border:2px solid #80d880;border-top-color:#559055;border-left-color:#559055;padding-left:4px}`, () => {
  const m = [['File',2401,47],['Edit',2464,51],['Options',2530,103],['View',2649,63],['Properties',2729,135],['Layers',2871,88],['Tools',2985,70],['Symbol',3071,96],['Highlight',3184,118],['Simulation',3318,142]];
  const ic = [['open',2390,48],['save',2446,42],['reload',2494,48],0,2546,['undo',2556,44],['redo',2609,44],['cut',2658,46],['copy',2710,46],['paste',2760,48],['x',2825,26],0,2867,['pics',2875,46],['swap',2927,48],0,2979,['down',2991,36],['desc',3036,50],['up',3095,38],0,3143,['brush',3150,46],['sun',3202,48],0,3255,['gate',3262,48],['text',3324,32],['wire',3383,14],['line',3427,30],['rect',3476,36],['poly',3525,42],['arc',3580,42],['circle',3626,48],0,3679,['zoom',3688,42],0,3739,['full',3748,34]];
  const cells = [];
  for(let i = 0; i < ic.length; i++){ if(ic[i] === 0) cells.push([ic[++i],3,'<div class="s"></div>']); else { const [n,x,w] = ic[i]; cells.push([x,w,`<svg width="${w}" height="48">${XI[n]}</svg>`]); } }
  return `<div class="title row">${flow([[2388,32,'<menu-icon></menu-icon>'],[3135,310,T('xschem - vbias.sch*',304)]],2376)}</div>
<div class="body col"><div class="menu row">${flow(m.map(([t,x,w]) => t === 'Layers' ? [x,105,T(t,w),'background:#88dd00;height:38px;padding-left:9px'] : [x,w,T(t,w)]),2391)}</div><div class="strip"></div>
<div class="tools row">${flow(cells,2388)}</div>
<div class="tabs row">${flow([[2388,208,`<div class="tab row">${T('start_page.sch',193)}</div>`],[2596,152,`<div class="tab row" style="background:#98fb98;border-color:#80c880">${T('vbias.sch*',136)}</div>`],[2749,44,`<div class="tab row" style="padding-left:11px">${T('+',22)}</div>`]],2388)}</div>
<schematic-canvas></schematic-canvas>
<div class="status row">${flow([[2393,80,T('SNAP:',76)],[2476,134,`<div class="f row">${T('10',34)}</div>`],[2614,76,T('GRID:',73)],[2694,134,`<div class="f row">${T('20',34)}</div>`],[2832,90,T('MODE:',90)],[2959,72,T('spice',69)],[3066,132,T('Stretch: 0',129)],[3212,530,T('mouse = -570 -490 - selected: 0 path: .',528)]],2388)}</div></div>`;
});
</script>
</body>
</html>
